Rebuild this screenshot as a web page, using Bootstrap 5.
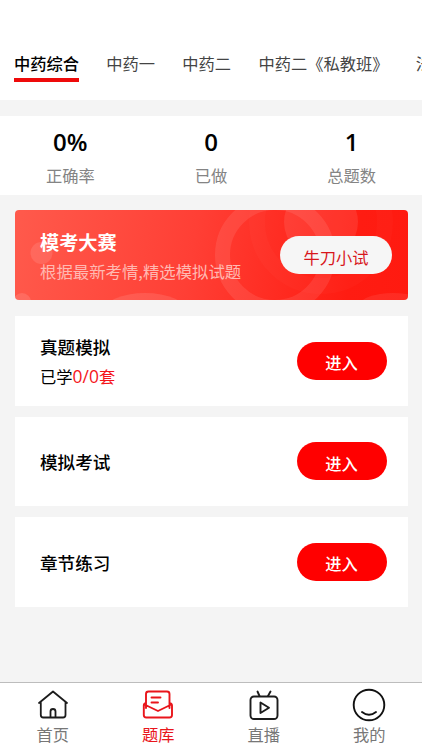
<!DOCTYPE html>
<html lang="zh-CN">
<head>
<meta charset="utf-8">
<meta name="viewport" content="width=device-width, initial-scale=1">
<title>题库</title>
<link rel="stylesheet" href="https://cdn.jsdelivr.net/npm/bootstrap@5.3.0/dist/css/bootstrap.min.css">
<style>
body{font-family:"Noto Sans CJK SC",sans-serif;font-size:16.25px;line-height:24px;background:#f4f4f4;color:#000;height:750px}
.tabs-bar{height:99.5px;padding:51px 0 0 14px;gap:27.3px}
.tab-item{color:#444;height:31px;flex:none;text-decoration:none}
.tab-item.current{color:#000;font-weight:500;border-bottom:4px solid #ee0a0a}
.stats{height:79px;margin-top:16px}
.figure-num{font:600 24px/32px "Open Sans",sans-serif;padding-top:10px}
.stat-label{color:#848484;line-height:24px;margin-top:5px}
.main-list{padding:15.5px 14px 0 15px}
.banner{height:90px;border-radius:4px;background:linear-gradient(100deg,#ff5a4c 0%,#ff3f35 45%,#ff1c12 85%,#ff1a10 100%);padding:0 16px 0 25px}
.banner-title{font-size:19.2px;line-height:28px;font-weight:700}
.banner-sub{font-size:16.4px;line-height:24px;color:#ffb9b2;margin-top:3px}
.try-btn{width:112px;height:38px;background:#f6f6f6;color:#d8161c;padding-top:4px}
.entry{height:89.5px;padding:0 21.5px 0 25px;margin-bottom:11px}
.entry-title{font-size:17.6px;font-weight:500;line-height:26px}
.plain-title{padding-top:2px}
.entry-sub{line-height:24px;margin-top:4px}
.num{font-family:"Open Sans",sans-serif;font-size:17.4px;letter-spacing:.1px}
.red{color:#f5151b}
.go-btn{width:90px;height:38px;background:#f00;color:#fff;font-weight:500;padding-top:3px}
.bottom-bar{height:68px;border-top:1px solid #bdbdbd}
.bottom-bar a{color:#777;text-decoration:none}
.bottom-bar a.current{color:#e9151b}
.bottom-bar svg{margin-top:5px;display:block}
.bottom-bar span{line-height:24px}
</style>
<script src="https://cdn.jsdelivr.net/npm/bootstrap@5.3.0/dist/js/bootstrap.bundle.min.js"></script>
</head>
<body class="d-flex flex-column overflow-hidden">
<nav class="tabs-bar bg-white d-flex text-nowrap overflow-hidden flex-shrink-0">
  <a class="tab-item current">中药综合</a><a class="tab-item">中药一</a><a class="tab-item">中药二</a><a class="tab-item">中药二《私教班》</a><a class="tab-item">法规</a>
</nav>
<section class="stats bg-white row g-0 text-center flex-shrink-0">
  <div class="col"><div class="figure-num">0%</div><div class="stat-label">正确率</div></div>
  <div class="col"><div class="figure-num">0</div><div class="stat-label">已做</div></div>
  <div class="col"><div class="figure-num">1</div><div class="stat-label">总题数</div></div>
</section>
<main class="main-list flex-grow-1">
  <section class="banner position-relative overflow-hidden d-flex align-items-center justify-content-between text-white mb-3">
    <svg class="position-absolute top-0 start-0" width="393" height="90" viewBox="0 0 393 90" fill="none">
      <circle cx="26.500" cy="43" r="11" fill="#fff" fill-opacity=".11"/>
      <circle cx="7" cy="92" r="9" fill="#fff" fill-opacity=".12"/>
      <ellipse cx="130" cy="102" rx="42" ry="19" fill="#fff" fill-opacity=".11"/>
      <circle cx="260" cy="45" r="52.500" stroke="#fff" stroke-opacity=".09" stroke-width="15"/>
      <circle cx="306" cy="12" r="37" fill="#fff" fill-opacity=".09"/>
      <circle cx="306" cy="12" r="64" stroke="#fff" stroke-opacity=".02" stroke-width="16"/>
      <ellipse cx="378" cy="96" rx="34" ry="13" fill="#fff" fill-opacity=".08"/>
    </svg>
    <div class="position-relative"><div class="banner-title">模考大赛</div><div class="banner-sub">根据最新考情,精选模拟试题</div></div>
    <a class="try-btn position-relative rounded-pill d-flex align-items-center justify-content-center text-decoration-none">牛刀小试</a>
  </section>
  <section class="entry bg-white d-flex align-items-center justify-content-between">
    <div><div class="entry-title">真题模拟</div><div class="entry-sub">已学<span class="red"><span class="num">0/0</span>套</span></div></div>
    <a class="go-btn rounded-pill d-flex align-items-center justify-content-center text-decoration-none">进入</a>
  </section>
  <section class="entry bg-white d-flex align-items-center justify-content-between">
    <div class="entry-title plain-title">模拟考试</div>
    <a class="go-btn rounded-pill d-flex align-items-center justify-content-center text-decoration-none">进入</a>
  </section>
  <section class="entry bg-white d-flex align-items-center justify-content-between">
    <div class="entry-title plain-title">章节练习</div>
    <a class="go-btn rounded-pill d-flex align-items-center justify-content-center text-decoration-none">进入</a>
  </section>
</main>
<nav class="bottom-bar bg-white row g-0 flex-shrink-0">
  <a class="col d-flex flex-column align-items-center">
    <svg width="34" height="34" viewBox="0 0 34 34" fill="none" stroke="#1c1c1c" stroke-width="1.800" stroke-linecap="round" stroke-linejoin="round"><path d="M3 15 17 3.500 31 15M4.800 14V27q0 2.500 2.500 2.500H27q2.500 0 2.500-2.500V14M14.500 29V23.500a2.500 2.500 0 0 1 5 0V29"/></svg>
    <span>首页</span></a>
  <a class="col d-flex flex-column align-items-center current">
    <svg width="34" height="34" viewBox="0 0 34 34" fill="none" stroke="#e9151b" stroke-width="1.900" stroke-linecap="round" stroke-linejoin="round"><path d="M5 20V6q0-2.500 2.500-2.500H26q2.500 0 2.500 2.500V20M5 15Q2.800 15.500 2.800 17.500V27q0 2.500 2.500 2.500H28.500q2.500 0 2.500-2.500V17.500Q31 15.500 28.500 15M3.500 16.500 17 23 30.300 16.500M10.500 9.500H19.500M10.500 14.500H17"/></svg>
    <span>题库</span></a>
  <a class="col d-flex flex-column align-items-center">
    <svg width="34" height="34" viewBox="0 0 34 34" fill="none" stroke="#1c1c1c" stroke-width="1.900" stroke-linecap="round" stroke-linejoin="round"><rect x="3.500" y="8.500" width="27" height="22.500" rx="3.500"/><path d="M10.500 3.500 12.500 8M23.500 3.500 21 8M13.500 14.500V25L22 19.700Z"/></svg>
    <span>直播</span></a>
  <a class="col d-flex flex-column align-items-center">
    <svg width="34" height="34" viewBox="0 0 34 34" fill="none" stroke="#111" stroke-width="1.900" stroke-linecap="round"><circle cx="17" cy="17" r="15.300"/><path d="M10 24Q17 29.500 24 24"/></svg>
    <span>我的</span></a>
</nav>
</body>
</html>
